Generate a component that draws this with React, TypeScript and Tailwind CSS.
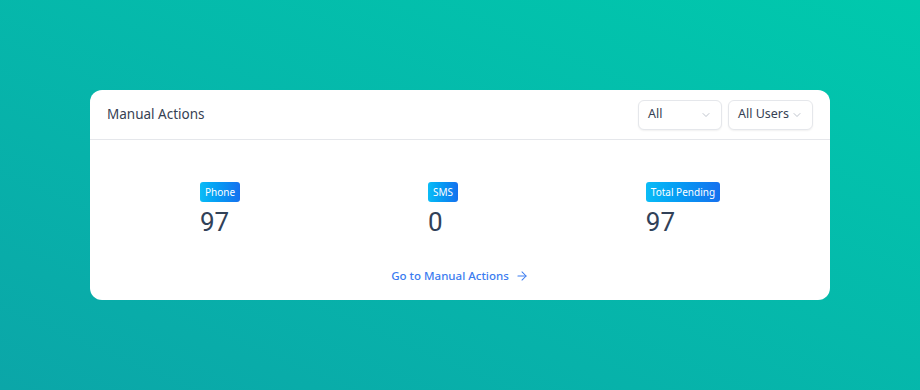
import { ChevronDown, ArrowRight } from 'lucide-react';

// --- data kartu ---
const STATS = [
  { label: 'Phone', value: 97 },
  { label: 'SMS', value: 0 },
  { label: 'Total Pending', value: 97 },
];

const FILTERS = [
  { label: 'All', width: 'w-[84px]' },
  { label: 'All Users', width: 'w-[85px]' },
];

function SelectBox({ label, width }: { label: string; width: string }) {
  return (
    <div
      className={`${width} h-[30px] flex items-center justify-between pl-[9px] pr-[9px] rounded-md border border-gray-200 bg-white shadow-[0_1px_2px_rgba(0,0,0,0.06)] text-[12.5px] text-gray-700`}
    >
      <span>{label}</span>
      <ChevronDown className="w-3 h-3 text-gray-400" strokeWidth={1.25} />
    </div>
  );
}

export default function App() {
  return (
    <div
      className="h-[390px] w-full pt-[90px] bg-gradient-to-tr from-[#0ba6a8] to-[#00c9ad]"
      style={{ fontFamily: '"Noto Sans", "Open Sans", sans-serif' }}
    >
      <div className="mx-auto w-[740px] h-[210px] bg-white rounded-xl flex flex-col overflow-hidden">
        {/* Header */}
        <div className="h-[50px] flex items-center justify-between pl-[17px] pr-[17px] border-b border-gray-200">
          <h2 className="text-[13.5px] text-gray-700">Manual Actions</h2>
          <div className="flex items-center gap-[6px]">
            {FILTERS.map((f) => (
              <SelectBox key={f.label} label={f.label} width={f.width} />
            ))}
          </div>
        </div>

        {/* Body */}
        <div className="flex-1 flex flex-col px-4 pt-[42px]">
          <div className="flex justify-around">
            {STATS.map((s) => (
              <div key={s.label} className="flex flex-col items-start">
                <span className="h-5 px-[5px] flex items-center rounded-[3px] bg-gradient-to-r from-[#0cbcf6] to-[#1670ee] text-white text-[10px]">
                  {s.label}
                </span>
                <span
                  className="mt-[5px] text-[26px] leading-[30px] text-slate-700"
                  style={{ fontFamily: 'Roboto, sans-serif' }}
                >
                  {s.value}
                </span>
              </div>
            ))}
          </div>

          <div className="mt-[30px] flex justify-center">
            <a href="#" className="flex items-center gap-[6px] text-[11.5px] font-medium text-[#3b7cf0]">
              Go to Manual Actions
              <ArrowRight className="w-[14px] h-[14px]" strokeWidth={1.75} />
            </a>
          </div>
        </div>
      </div>
    </div>
  );
}
